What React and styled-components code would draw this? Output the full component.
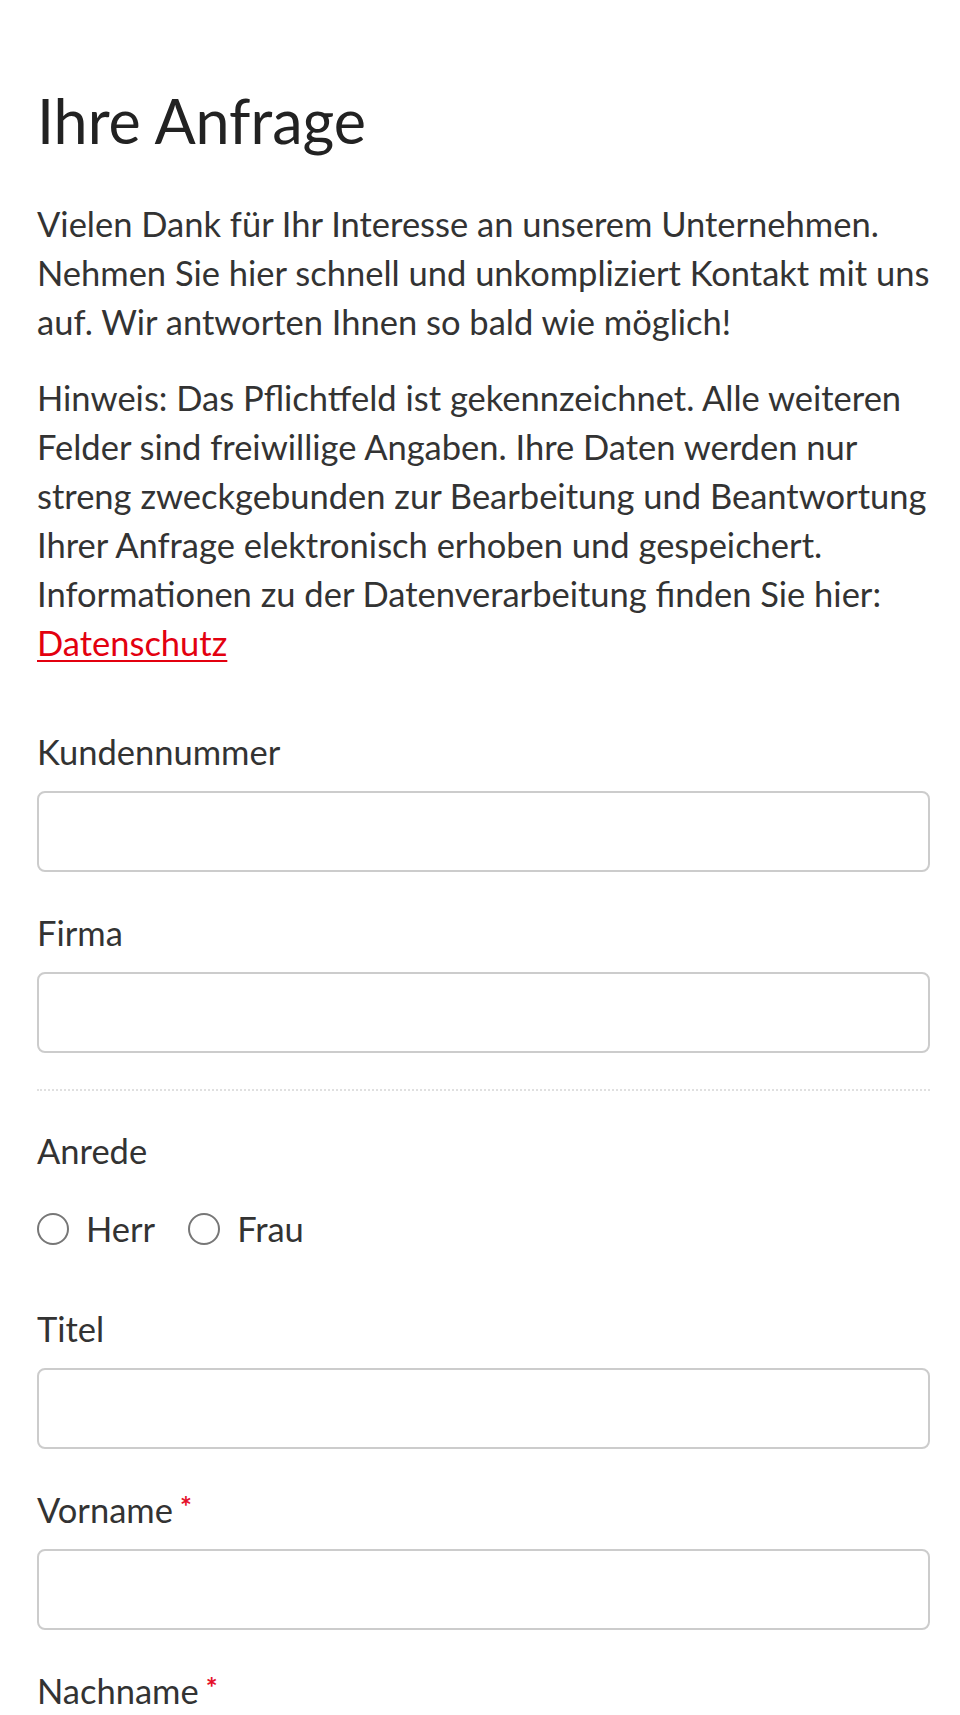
import React from "react";
import styled, { createGlobalStyle } from "styled-components";

const Global = createGlobalStyle`
  html, body { margin: 0; padding: 0; background: #fff; }
  body { font-family: Lato, "Noto Sans", sans-serif; color: #333; }
  * { box-sizing: border-box; }
`;

const Page = styled.main`
  padding: 85px 30px 0 37px;
  width: 960px;
`;

const Title = styled.h1`
  margin: 0;
  font-size: 61px;
  line-height: 72px;
  font-weight: 400;
  color: #222;
`;

const Text = styled.p`
  margin: ${(p) => p.$top || 0}px 0 0;
  font-size: 34.5px;
  line-height: 49px;
  color: #333;
`;

const Link = styled.a`
  color: #e3000f;
  text-decoration: underline;
  text-underline-offset: 4px;
  text-decoration-thickness: 2px;
`;

const Form = styled.form`
  margin-top: 61px;
  display: flex;
  flex-direction: column;
`;

const Field = styled.div`
  display: flex;
  flex-direction: column;
  margin-top: ${(p) => p.$top ?? 37}px;
`;

const Label = styled.label`
  font-size: 34.5px;
  line-height: 48px;
  color: #333;
  display: flex;
  align-items: flex-start;
`;

const Req = styled.span`
  color: #e5102a;
  font-size: 28px;
  font-weight: 700;
  line-height: 1;
  margin-left: 7px;
  margin-top: 6px;
`;

const Input = styled.input`
  margin-top: 15px;
  height: 81px;
  width: 100%;
  border: 2px solid #cccccc;
  border-radius: 8px;
  background: #fff;
  font: inherit;
  font-size: 34px;
  padding: 0 16px;
  outline: none;
`;

const Divider = styled.hr`
  margin: 36px 0 0;
  border: 0;
  border-top: 2px dotted #e0e0e0;
  height: 0;
`;

const RadioRow = styled.div`
  margin-top: 30px;
  display: flex;
  align-items: center;
  gap: 33px;
  height: 48px;
`;

const RadioOption = styled.label`
  display: flex;
  align-items: center;
  gap: 17px;
  font-size: 34.5px;
  line-height: 48px;
  color: #333;
`;

const Circle = styled.span`
  width: 32px;
  height: 32px;
  border-radius: 50%;
  border: 2px solid #777;
  background: #fff;
  display: inline-block;
  flex: none;
`;

function TextField({ label, required, top }) {
  return (
    <Field $top={top}>
      <Label>
        {label}
        {required && <Req>*</Req>}
      </Label>
      <Input type="text" />
    </Field>
  );
}

export default function App() {
  return (
    <>
      <Global />
      <Page>
        <Title>Ihre Anfrage</Title>
        <Text $top={42}>
          Vielen Dank für Ihr Interesse an unserem Unternehmen. Nehmen Sie hier schnell und
          unkompliziert Kontakt mit uns auf. Wir antworten Ihnen so bald wie möglich!
        </Text>
        <Text $top={27}>
          Hinweis: Das Pflichtfeld ist gekennzeichnet. Alle weiteren Felder sind freiwillige
          Angaben. Ihre Daten werden nur streng zweckgebunden zur Bearbeitung und Beantwortung
          Ihrer Anfrage elektronisch erhoben und gespeichert. Informationen zu der
          Datenverarbeitung finden Sie hier: <Link href="#">Datenschutz</Link>
        </Text>
        <Form onSubmit={(e) => e.preventDefault()}>
          <TextField label="Kundennummer" top={0} />
          <TextField label="Firma" />
          <Divider />
          <Field $top={36}>
            <Label>Anrede</Label>
            <RadioRow>
              <RadioOption>
                <Circle />
                Herr
              </RadioOption>
              <RadioOption>
                <Circle />
                Frau
              </RadioOption>
            </RadioRow>
          </Field>
          <TextField label="Titel" top={52} />
          <TextField label="Vorname" required />
          <TextField label="Nachname" required />
        </Form>
      </Page>
    </>
  );
}
